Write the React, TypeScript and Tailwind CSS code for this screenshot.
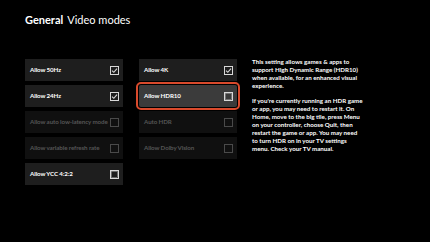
import React from "react";

type Item = { label: string; checked?: boolean; disabled?: boolean; focused?: boolean };

const col1: Item[] = [
  { label: "Allow 50Hz", checked: true },
  { label: "Allow 24Hz", checked: true },
  { label: "Allow auto low-latency mode", disabled: true },
  { label: "Allow variable refresh rate", disabled: true },
  { label: "Allow YCC 4:2:2" },
];

const col2: Item[] = [
  { label: "Allow 4K", checked: true },
  { label: "Allow HDR10", focused: true },
  { label: "Auto HDR", disabled: true },
  { label: "Allow Dolby Vision", disabled: true },
];

const para1 = [
  "This setting allows games & apps to",
  "support High Dynamic Range (HDR10)",
  "when available, for an enhanced visual",
  "experience.",
];
const para2 = [
  "If you're currently running an HDR game",
  "or app, you may need to restart it. On",
  "Home, move to the big tile, press Menu",
  "on your controller, choose Quit, then",
  "restart the game or app. You may need",
  "to turn HDR on in your TV settings",
  "menu. Check your TV manual.",
];

function Box({ checked, disabled }: { checked?: boolean; disabled?: boolean }) {
  const c = disabled ? "#4a4a4a" : "#d8d8d8";
  return (
    <svg width="9" height="9" viewBox="0 0 9 9" className="shrink-0">
      <rect x="0.5" y="0.5" width="8" height="8" fill="none" stroke={c} strokeWidth="1" />
      {checked && <path d="M2 4.6 L3.8 6.3 L7 2.6" fill="none" stroke={c} strokeWidth="1.1" />}
      {!checked && !disabled && <rect x="1.5" y="1.5" width="6" height="6" fill="none" stroke="#9a9a9a" strokeWidth="0.6" />}
    </svg>
  );
}

function Tile({ item }: { item: Item }) {
  const bg = item.focused ? "bg-[#3b3b3b]" : item.disabled ? "bg-[#101010]" : "bg-[#1e1e1e]";
  const text = item.disabled ? "text-[#555555]" : "text-white";
  return (
    <div
      className={`h-[22px] w-[98px] flex items-center justify-between pl-[5px] pr-[4px] ${bg} ${
        item.focused ? "outline-2 outline-offset-1 outline-[#d94a2c] rounded-[2px]" : ""
      }`}
    >
      <span className={`text-[6.2px] font-bold leading-none whitespace-nowrap tracking-[-0.1px] ${text}`}>{item.label}</span>
      <Box checked={item.checked} disabled={item.disabled} />
    </div>
  );
}

export default function App() {
  return (
    <div
      className="w-[430px] h-[242px] bg-black overflow-hidden pl-[25px] pt-[12px]"
      style={{ fontFamily: 'Lato, "Noto Sans", sans-serif' }}
    >
      <div className="text-[11px] leading-[16px] text-white">
        <span className="font-bold">General</span>
        <span className="ml-[4px]">Video modes</span>
      </div>
      <div className="flex mt-[31px]">
        <div className="flex flex-col gap-[4px]">
          {col1.map((i) => (
            <Tile key={i.label} item={i} />
          ))}
        </div>
        <div className="flex flex-col gap-[4px] ml-[16px]">
          {col2.map((i) => (
            <Tile key={i.label} item={i} />
          ))}
        </div>
        <div className="ml-[15px] text-[6.2px] leading-[8px] text-white font-bold -mt-[1px] whitespace-nowrap">
          {para1.map((l) => (
            <div key={l}>{l}</div>
          ))}
          <div className="h-[7px]" />
          {para2.map((l) => (
            <div key={l}>{l}</div>
          ))}
        </div>
      </div>
    </div>
  );
}
